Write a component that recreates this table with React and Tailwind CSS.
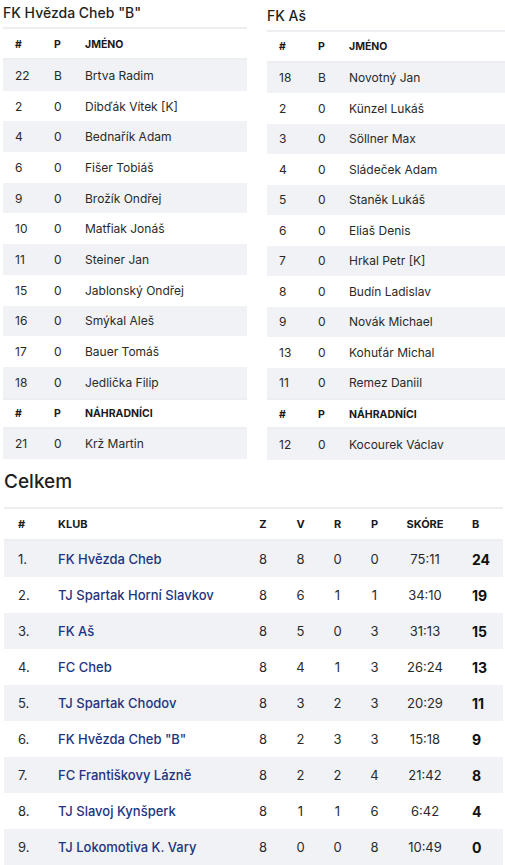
import React from "react";

const left = {
  title: 'FK Hvězda Cheb "B"',
  players: [
    ["22", "B", "Brtva Radim"],
    ["2", "0", "Dibďák Vítek [K]"],
    ["4", "0", "Bednařík Adam"],
    ["6", "0", "Fišer Tobiáš"],
    ["9", "0", "Brožík Ondřej"],
    ["10", "0", "Matfiak Jonáš"],
    ["11", "0", "Steiner Jan"],
    ["15", "0", "Jablonský Ondřej"],
    ["16", "0", "Smýkal Aleš"],
    ["17", "0", "Bauer Tomáš"],
    ["18", "0", "Jedlička Filip"],
  ],
  bench: [["21", "0", "Krž Martin"]],
};

const right = {
  title: "FK Aš",
  players: [
    ["18", "B", "Novotný Jan"],
    ["2", "0", "Künzel Lukáš"],
    ["3", "0", "Söllner Max"],
    ["4", "0", "Sládeček Adam"],
    ["5", "0", "Staněk Lukáš"],
    ["6", "0", "Eliaš Denis"],
    ["7", "0", "Hrkal Petr [K]"],
    ["8", "0", "Budín Ladislav"],
    ["9", "0", "Novák Michael"],
    ["13", "0", "Kohuťár Michal"],
    ["11", "0", "Remez Daniil"],
  ],
  bench: [["12", "0", "Kocourek Václav"]],
};

const standings = [
  ["1.", "FK Hvězda Cheb", 8, 8, 0, 0, "75:11", 24],
  ["2.", "TJ Spartak Horní Slavkov", 8, 6, 1, 1, "34:10", 19],
  ["3.", "FK Aš", 8, 5, 0, 3, "31:13", 15],
  ["4.", "FC Cheb", 8, 4, 1, 3, "26:24", 13],
  ["5.", "TJ Spartak Chodov", 8, 3, 2, 3, "20:29", 11],
  ["6.", 'FK Hvězda Cheb "B"', 8, 2, 3, 3, "15:18", 9],
  ["7.", "FC Františkovy Lázně", 8, 2, 2, 4, "21:42", 8],
  ["8.", "TJ Slavoj Kynšperk", 8, 1, 1, 6, "6:42", 4],
  ["9.", "TJ Lokomotiva K. Vary", 8, 0, 0, 8, "10:49", 0],
];

function HeaderRow({ label, first }) {
  return (
    <div
      className={
        "grid grid-cols-[39px_31px_1fr] items-center border-y-2 border-[#eceef1] pt-[2px] text-[10.5px] font-bold text-[#1a1a1a] " +
        (first ? "h-[33px]" : "h-[31px]")
      }
    >
      <div className="pl-3">#</div>
      <div className="pl-3">P</div>
      <div className="pl-3">{label}</div>
    </div>
  );
}

function PlayerRow({ p, i, rowH }) {
  return (
    <div
      className={
        "grid grid-cols-[39px_31px_1fr] items-center pt-[1px] text-[12px] text-[#2a2a2a] " +
        rowH +
        (i % 2 === 0 ? " bg-[#f0f2f5]" : " bg-white")
      }
    >
      <div className="pl-3">{p[0]}</div>
      <div className="pl-3">{p[1]}</div>
      <div className="pl-3 whitespace-nowrap">{p[2]}</div>
    </div>
  );
}

function Lineup({ team, top, rowH }) {
  return (
    <div className={"flex flex-col " + top}>
      <div className="h-[27px] pt-[4px] text-[14px] font-medium leading-[18px] text-[#1f1f1f]">
        {team.title}
      </div>
      <HeaderRow label="JMÉNO" first />
      {team.players.map((p, i) => (
        <PlayerRow key={i} p={p} i={i} rowH={rowH} />
      ))}
      <HeaderRow label="NÁHRADNÍCI" />
      {team.bench.map((p, i) => (
        <PlayerRow key={i} p={p} i={i} rowH={rowH} />
      ))}
    </div>
  );
}

export default function App() {
  return (
    <div
      className="w-[505px] h-[865px] overflow-hidden bg-white"
      style={{ fontFamily: "Inter, 'Noto Sans', sans-serif" }}
    >
      <div className="ml-[3px] grid w-[508px] grid-cols-[244px_244px] gap-x-[20px]">
        <Lineup team={left} top="" rowH="h-[30.7px]" />
        <Lineup team={right} top="pt-[2.5px]" rowH="h-[30.5px]" />
      </div>

      <div className="ml-[4px] w-[499px]">
        <div className="pt-[9px] pb-[12px] text-[19px] font-medium leading-[26px] text-[#1f1f1f]">
          Celkem
        </div>
        <div className="flex h-[34px] items-center border-y-2 border-[#eceef1] pt-[2px] text-[11px] font-bold text-[#1a1a1a]">
          <div className="w-[42px] shrink-0 pl-[14px]">#</div>
          <div className="flex-1 pl-3">KLUB</div>
          <div className="w-[38px] shrink-0 text-center">Z</div>
          <div className="w-[37px] shrink-0 text-center">V</div>
          <div className="w-[37px] shrink-0 text-center">R</div>
          <div className="w-[37px] shrink-0 text-center">P</div>
          <div className="w-[64px] shrink-0 text-center">SKÓRE</div>
          <div className="w-[46px] shrink-0 pl-[15px]">B</div>
        </div>
        {standings.map((r, i) => (
          <div
            key={i}
            className={
              "flex h-[36px] items-center pt-[2px] text-[13px] text-[#2a2a2a] " +
              (i % 2 === 0 ? "bg-[#f0f2f5]" : "bg-white")
            }
          >
            <div className="w-[42px] shrink-0 pl-[14px]">{r[0]}</div>
            <div className="flex-1 pl-3 font-medium text-[#1e3480] whitespace-nowrap">
              {r[1]}
            </div>
            <div className="w-[38px] shrink-0 text-center">{r[2]}</div>
            <div className="w-[37px] shrink-0 text-center">{r[3]}</div>
            <div className="w-[37px] shrink-0 text-center">{r[4]}</div>
            <div className="w-[37px] shrink-0 text-center">{r[5]}</div>
            <div className="w-[64px] shrink-0 text-center">{r[6]}</div>
            <div className="w-[46px] shrink-0 pl-[15px] text-[14px] font-bold text-[#111]">
              {r[7]}
            </div>
          </div>
        ))}
      </div>
    </div>
  );
}
